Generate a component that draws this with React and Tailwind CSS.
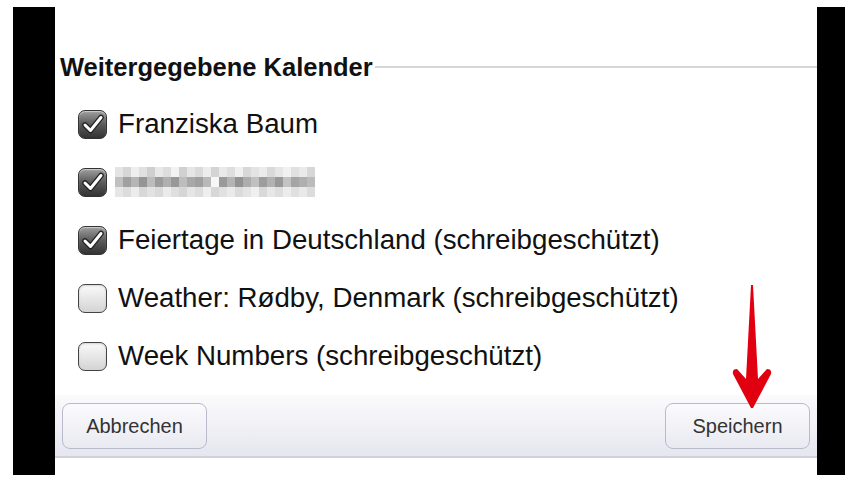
import React from 'react';

function CheckBox({ checked }) {
  if (checked) {
    return (
      <div className="w-[29px] h-[29px] rounded-[7px] border border-[#333] bg-gradient-to-b from-[#a0a0a0] via-[#5a5a5a] to-[#333] flex items-center justify-center shadow-[inset_0_1px_1px_rgba(255,255,255,0.5)]">
        <svg width="22" height="20" viewBox="0 0 22 20">
          <path d="M3 11 L8.5 16.5 L19 3.5" fill="none" stroke="#222" strokeWidth="5.5" strokeLinecap="round" strokeLinejoin="round" />
          <path d="M3 11 L8.5 16.5 L19 3.5" fill="none" stroke="#fff" strokeWidth="3" strokeLinecap="round" strokeLinejoin="round" />
        </svg>
      </div>
    );
  }
  return (
    <div className="w-[29px] h-[29px] rounded-[7px] border-[1.5px] border-[#444] bg-gradient-to-b from-[#fafafa] to-[#d4d4d4] shadow-[inset_0_1px_2px_rgba(0,0,0,0.15)]" />
  );
}

// verpixelter Name (Mosaik)
const mosaic = [
  ['#e4e4e4', '#d6d6d6', '#eee', '#e0e0e0', '#cfcfcf', '#e8e8e8', '#ddd', '#f2f2f2', '#d0d0d0', '#e6e6e6', '#dadada', '#ececec', '#d4d4d4', '#e9e9e9', '#dedede', '#f0f0f0', '#d8d8d8', '#e3e3e3', '#ebebeb', '#d9d9d9', '#e6e6e6', '#f1f1f1', '#e0e0e0', '#eaeaea', '#d7d7d7'],
  ['#c0c0c0', '#a0a0a0', '#b5b5b5', '#959595', '#bcbcbc', '#9c9c9c', '#b0b0b0', '#989898', '#bdbdbd', '#a8a8a8', '#a0a0a0', '#b9b9b9', '#f7f7f7', '#9a9a9a', '#b4b4b4', '#939393', '#adadad', '#c0c0c0', '#9d9d9d', '#b2b2b2', '#999', '#c3c3c3', '#a5a5a5', '#afafaf', '#bbbbbb'],
  ['#e6e6e6', '#dcdcdc', '#ececec', '#d8d8d8', '#e2e2e2', '#dadada', '#ebebeb', '#dfdfdf', '#d6d6d6', '#e5e5e5', '#dddddd', '#eeeeee', '#d7d7d7', '#e1e1e1', '#eaeaea', '#dbdbdb', '#e4e4e4', '#efefef', '#d9d9d9', '#e7e7e7', '#dedede', '#ececec', '#e0e0e0', '#e9e9e9', '#dcdcdc'],
];

function Row({ checked, children }) {
  return (
    <div className="h-[58px] flex items-center pl-[23px]">
      <CheckBox checked={checked} />
      <div className="ml-[11px] text-[27.7px] text-[#111] leading-none">{children}</div>
    </div>
  );
}

export default function App() {
  return (
    <div className="relative w-[858px] h-[483px] bg-white pt-[7px] flex font-['Liberation_Sans',Arial,sans-serif] overflow-hidden">
      <div className="ml-[13px] w-[42px] h-[468px] bg-black" />

      <div className="flex-1 h-[468px] flex flex-col">
        <div className="mt-[45px] flex items-center pl-[5px]">
          <span className="text-[25.5px] font-bold text-[#111] leading-[30px]">Weitergegebene Kalender</span>
          <div className="flex-1 ml-[2px] h-[2px] bg-[#d6d6d6]" />
        </div>

        <div className="mt-[13px]">
          <Row checked>Franziska Baum</Row>
          <div className="h-[58px] flex items-center pl-[23px]">
            <CheckBox checked />
            <div className="ml-[8px] flex flex-col">
              {mosaic.map((line, i) => (
                <div key={i} className="flex">
                  {line.map((c, j) => (
                    <div key={j} className="w-[8px] h-[10px]" style={{ backgroundColor: c }} />
                  ))}
                </div>
              ))}
            </div>
          </div>
          <Row checked>Feiertage in Deutschland (schreibgeschützt)</Row>
          <Row>Weather: Rødby, Denmark (schreibgeschützt)</Row>
          <Row>Week Numbers (schreibgeschützt)</Row>
        </div>

        <div className="mt-[10px] h-[63px] bg-gradient-to-b from-[#fbfbfd] to-[#e6e6ef] border-b-2 border-[#cfd0dc] flex items-center justify-between px-[7px]">
          <button className="w-[145px] h-[46px] rounded-[8px] border border-[#b9bbcc] bg-gradient-to-b from-[#fbfbfd] to-[#e9e9f1] text-[20px] text-[#333] font-['Liberation_Sans',Arial,sans-serif]">
            Abbrechen
          </button>
          <button className="w-[145px] h-[46px] rounded-[8px] border border-[#b9bbcc] bg-gradient-to-b from-[#fbfbfd] to-[#e9e9f1] text-[20px] text-[#333] font-['Liberation_Sans',Arial,sans-serif]">
            Speichern
          </button>
        </div>
      </div>

      <div className="mr-[13px] w-[28px] h-[468px] bg-black" />

      {/* roter Pfeil */}
      <svg className="absolute left-[730px] top-[283px]" width="44" height="128" viewBox="0 0 44 128">
        <path d="M21 2 L23 2 L28 96 L37 86 Q42 86 41 91 L23 125 L21 125 L3 91 Q2 86 7 86 L16 96 Z" fill="#e00010" />
      </svg>
    </div>
  );
}
